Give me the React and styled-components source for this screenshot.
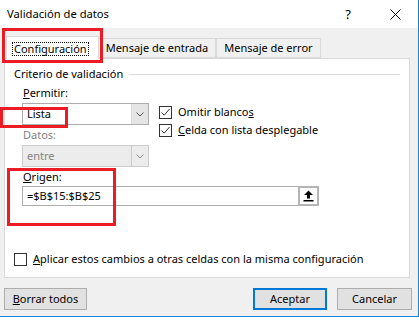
import React from "react"
import styled, { createGlobalStyle } from "styled-components"

const FONT = `"Noto Sans", "DejaVu Sans", sans-serif`

const GlobalStyle = createGlobalStyle`
  html, body {
    margin: 0;
    padding: 0;
    background: #fff;
  }
  body {
    font-family: ${FONT};
    font-size: 11px;
    color: #000;
  }
`

const Window = styled.div`
  position: relative;
  width: 419px;
  height: 317px;
  box-sizing: border-box;
  background: #f0f0f0;
  border-right: 1px solid #1883d7;
  border-bottom: 1px solid #1883d7;
  display: flex;
  flex-direction: column;
  overflow: hidden;
`

const TitleBar = styled.div`
  height: 28px;
  flex: none;
  background: #fff;
  display: flex;
  align-items: center;
  padding-left: 7px;
`

const Title = styled.div`
  flex: 1;
  font-size: 11.2px;
  line-height: 16px;
  padding-bottom: 1px;
`

const HelpMark = styled.div`
  width: 14px;
  margin-right: 34px;
  font-size: 13px;
  line-height: 16px;
  text-align: center;
`

const CloseBox = styled.div`
  width: 12px;
  margin-right: 17px;
  display: flex;
  align-items: center;
  justify-content: center;
`

const Body = styled.div`
  flex: 1;
  display: flex;
  flex-direction: column;
  padding: 8px 8px 0 4px;
`

const TabRow = styled.div`
  display: flex;
  align-items: flex-end;
  height: 22px;
  padding-left: 2px;
  position: relative;
  z-index: 1;
`

const Tab = styled.div`
  box-sizing: border-box;
  height: ${(p) => (p.$active ? "23px" : "20px")};
  margin-bottom: ${(p) => (p.$active ? "-1px" : "0")};
  padding: ${(p) => (p.$active ? "4px 9px 0 5px" : "1px 7px 0")};
  background: ${(p) => (p.$active ? "#fff" : "#f0f0f0")};
  border: 1px solid #d9d9d9;
  border-bottom: ${(p) => (p.$active ? "none" : "1px solid #d9d9d9")};
  border-left: ${(p) => (p.$first ? "none" : "1px solid #d9d9d9")};
  line-height: 16px;
  white-space: nowrap;
`

const FocusText = styled.span`
  display: inline-block;
  outline: 1px dotted #000;
  outline-offset: -1px;
  line-height: 14px;
  padding: 0 2px;
`

const Panel = styled.div`
  box-sizing: border-box;
  height: 220px;
  background: #fff;
  border: 1px solid #d9d9d9;
  padding: 7px 8px 0;
  display: flex;
  flex-direction: column;
`

const GroupHeader = styled.div`
  display: flex;
  align-items: center;
  gap: 6px;
  line-height: 16px;
  padding-left: 1px;
`

const GroupLine = styled.div`
  flex: 1;
  height: 1px;
  background: #dcdcdc;
  margin-right: 1px;
`

const Group = styled.div`
  padding-left: 9px;
  display: flex;
  flex-direction: column;
`

const Label = styled.div`
  line-height: 16px;
  color: ${(p) => (p.$disabled ? "#838383" : "#000")};
  padding-left: 1px;
  margin-top: ${(p) => p.$top || 0}px;
`

const Row = styled.div`
  display: flex;
  gap: 10px;
`

const Column = styled.div`
  display: flex;
  flex-direction: column;
  gap: ${(p) => p.$gap || 0}px;
  padding-top: ${(p) => p.$top || 0}px;
`

const Select = styled.div`
  box-sizing: border-box;
  width: 127px;
  height: 22px;
  display: flex;
  border: 1px solid ${(p) => (p.$disabled ? "#cccccc" : "#adadad")};
  background: ${(p) => (p.$disabled ? "#ececec" : "#fff")};
  color: ${(p) => (p.$disabled ? "#838383" : "#000")};
  margin: 2px 0;
`

const SelectValue = styled.div`
  flex: 1;
  padding-left: 4px;
  line-height: 19px;
`

const SelectButton = styled.div`
  width: 16px;
  display: flex;
  align-items: center;
  justify-content: center;
  background: ${(p) => (p.$disabled ? "#ececec" : "#e5e5e5")};
  border-left: 1px solid ${(p) => (p.$disabled ? "#cccccc" : "#dadada")};
`

const CheckRow = styled.label`
  display: flex;
  align-items: center;
  gap: 6px;
  line-height: 16px;
  white-space: nowrap;
`

const Box = styled.span`
  box-sizing: border-box;
  width: 13px;
  height: 13px;
  border: 1px solid #333;
  background: #fff;
  display: flex;
  align-items: center;
  justify-content: center;
  flex: none;
`

const RangeInput = styled.div`
  box-sizing: border-box;
  width: 297px;
  height: 20px;
  border: 1px solid #adadad;
  display: flex;
  margin-top: 1px;
`

const RangeValue = styled.div`
  flex: 1;
  padding-left: 4px;
  line-height: 17px;
`

const PickButton = styled.div`
  box-sizing: border-box;
  width: 21px;
  margin: -1px -1px -1px 0;
  border: 2px solid #b4b4b4;
  background: #fff;
  display: flex;
  align-items: center;
  justify-content: center;
`

const ApplyRow = styled.div`
  margin-top: auto;
  margin-bottom: 10px;
  padding-left: 1px;
`

const Footer = styled.div`
  display: flex;
  align-items: center;
  padding-top: 10px;
  margin-right: -2px;
`

const Button = styled.div`
  box-sizing: border-box;
  width: ${(p) => p.$w}px;
  height: 22px;
  margin-left: ${(p) => p.$ml || 0}px;
  background: #e1e1e1;
  border: ${(p) => (p.$primary ? "2px solid #0078d7" : "1px solid #adadad")};
  display: flex;
  align-items: center;
  justify-content: center;
  line-height: 16px;
`

const Spacer = styled.div`
  flex: 1;
`

const Mark = styled.div`
  position: absolute;
  box-sizing: border-box;
  left: ${(p) => p.$x}px;
  top: ${(p) => p.$y}px;
  width: ${(p) => p.$w}px;
  height: ${(p) => p.$h}px;
  border: 3px solid #ed1c24;
  pointer-events: none;
  z-index: 5;
`

const Chevron = ({ color = "#555" }) => (
  <svg width="8" height="5" viewBox="0 0 8 5">
    <path d="M0.5 0.5 L4 4 L7.5 0.5" fill="none" stroke={color} strokeWidth="1" />
  </svg>
)

const Check = () => (
  <svg width="11" height="11" viewBox="0 0 11 11">
    <path d="M1.5 5.5 L4.2 8.2 L9.5 2" fill="none" stroke="#333" strokeWidth="1" />
  </svg>
)

const CheckBox = ({ checked, children }) => (
  <CheckRow>
    <Box>{checked && <Check />}</Box>
    <span>{children}</span>
  </CheckRow>
)

const UpArrow = () => (
  <svg width="11" height="12" viewBox="0 0 11 12">
    <path d="M5.5 0.5 L10 5 L7 5 L7 8.5 L4 8.5 L4 5 L1 5 Z" fill="#000" />
    <rect x="0.5" y="10" width="10" height="1.5" fill="#000" />
  </svg>
)

const CloseIcon = () => (
  <svg width="11" height="11" viewBox="0 0 11 11">
    <path d="M0.5 0.5 L10.5 10.5 M10.5 0.5 L0.5 10.5" stroke="#000" strokeWidth="1" />
  </svg>
)

export default function App() {
  return (
    <>
      <GlobalStyle />
      <Window>
        <TitleBar>
          <Title>Validación de datos</Title>
          <HelpMark>?</HelpMark>
          <CloseBox>
            <CloseIcon />
          </CloseBox>
        </TitleBar>
        <Body>
          <TabRow>
            <Tab $active>
              <FocusText>Configuración</FocusText>
            </Tab>
            <Tab $first>Mensaje de entrada</Tab>
            <Tab>Mensaje de error</Tab>
          </TabRow>
          <Panel>
            <GroupHeader>
              <span>Criterio de validación</span>
              <GroupLine />
            </GroupHeader>
            <Group>
              <Label $top={3}>
                <u>P</u>ermitir:
              </Label>
              <Row>
                <Column>
                  <Select>
                    <SelectValue>Lista</SelectValue>
                    <SelectButton>
                      <Chevron />
                    </SelectButton>
                  </Select>
                  <Label $disabled>Datos:</Label>
                  <Select $disabled>
                    <SelectValue>entre</SelectValue>
                    <SelectButton $disabled>
                      <Chevron color="#8a8a8a" />
                    </SelectButton>
                  </Select>
                </Column>
                <Column $gap={2} $top={3}>
                  <CheckBox checked>
                    Omitir blanco<u>s</u>
                  </CheckBox>
                  <CheckBox checked>
                    <u>C</u>elda con lista desplegable
                  </CheckBox>
                </Column>
              </Row>
              <Label>
                <u>O</u>rigen:
              </Label>
              <RangeInput>
                <RangeValue>=$B$15:$B$25</RangeValue>
                <PickButton>
                  <UpArrow />
                </PickButton>
              </RangeInput>
            </Group>
            <ApplyRow>
              <CheckBox>
                <u>A</u>plicar estos cambios a otras celdas con la misma configuración
              </CheckBox>
            </ApplyRow>
          </Panel>
          <Footer>
            <Button $w={83}>
              <span>
                <u>B</u>orrar todos
              </span>
            </Button>
            <Spacer />
            <Button $w={74} $primary>
              Aceptar
            </Button>
            <Button $w={75} $ml={10}>
              Cancelar
            </Button>
          </Footer>
        </Body>
        <Mark $x={2} $y={28} $w={101} $h={35} />
        <Mark $x={0} $y={107} $w={68} $h={21} />
        <Mark $x={7} $y={168} $w={109} $h={58} />
      </Window>
    </>
  )
}
